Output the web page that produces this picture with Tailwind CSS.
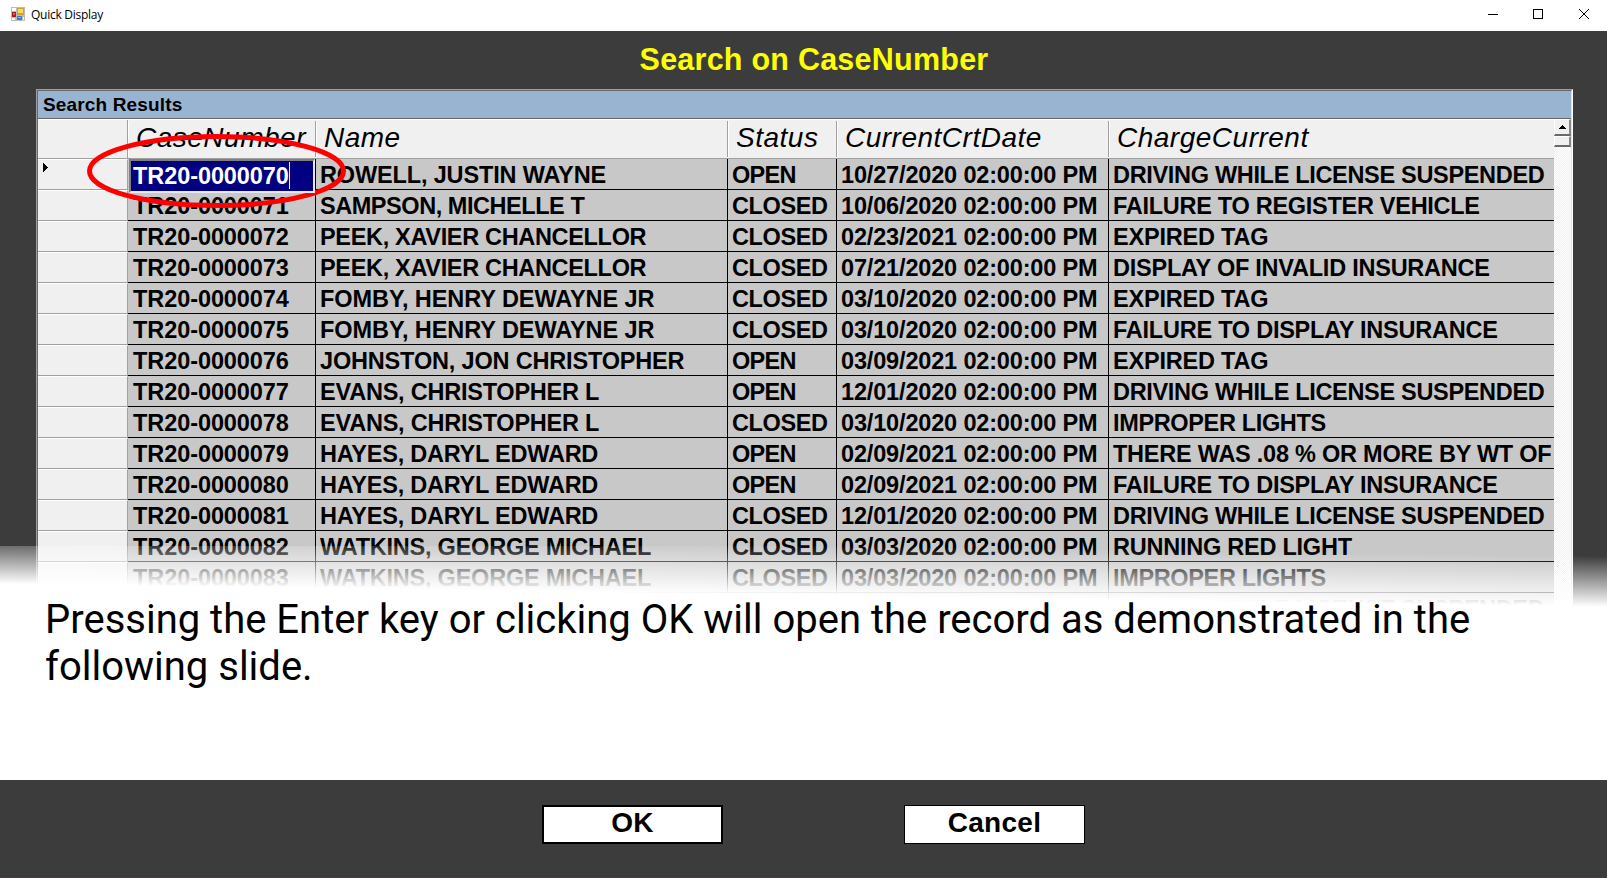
<!DOCTYPE html>
<html lang="en">
<head>
<meta charset="utf-8">
<title>Quick Display</title>
<script src="https://cdn.jsdelivr.net/npm/@tailwindcss/browser@4"></script>
</head>
<body class="relative flex h-[878px] w-[1607px] flex-col overflow-hidden bg-[#3c3c3c] font-['Liberation_Sans',Arial,sans-serif] text-black">
  <header class="flex h-[31px] shrink-0 items-center bg-white pl-[11px]">
    <svg class="mt-[-3px] h-[14px] w-[14px]" viewBox="0 0 14 14" shape-rendering="crispEdges">
      <path d="M0 0H14V14H0Z" fill="#b8bcc4"/><path d="M1 1H5V4H1ZM1 11H4V13H1ZM12 10H13V13H12Z" fill="#fff"/>
      <path d="M1 5H5V10H1Z" fill="#b01818"/><path d="M2 6H4V8H2Z" fill="#e06050"/>
      <path d="M6 1H13V8H6Z" fill="#d9a514"/><path d="M7 2H12V6H7Z" fill="#fbd95b"/>
      <path d="M6 9H11V13H6Z" fill="#3c78d8"/><path d="M7 10H10V11H7Z" fill="#8fb8f4"/>
    </svg>
    <span class="ml-[6px] mt-[-2px] whitespace-nowrap font-['Open_Sans',sans-serif] text-[12px] tracking-[-0.26px]">Quick Display</span>
    <svg class="ml-auto mr-[17px] mt-[-3px] h-[12px] w-[103px]" viewBox="0 0 103 12" fill="none" stroke="#000" shape-rendering="crispEdges">
      <path d="M1 6.5H11M46.500 1.500H55.500V10.500H46.500Z"/><path d="M92 1L102 11M102 1L92 11" shape-rendering="auto"/>
    </svg>
  </header>
  <h1 class="flex h-[58px] shrink-0 items-center justify-center pl-[21px] text-[30.500px] font-bold tracking-[0.24px] text-[#ffff00]"><span class="mt-[-1px] whitespace-nowrap">Search on CaseNumber</span></h1>
  <main class="ml-[36px] h-[560px] w-[1537px] shrink-0 border border-b-0 border-l-[#a0a0a0] border-r-white border-t-[#a0a0a0]">
   <div class="flex h-[559px] flex-col overflow-hidden border border-b-0 border-l-[#696969] border-r-[#e3e3e3] border-t-[#696969] bg-white">
    <div class="flex h-[28px] shrink-0 items-center border-b border-[#696969] bg-[#99b4d1] pl-[5px] pt-[2px] text-[19px] font-bold tracking-[0.15px]"><span>Search Results</span></div>
    <div class="flex">
      <div class="w-[1516px] shrink-0">
        <div class="grid h-[40px] grid-cols-[90px_188px_412px_109px_272px_445px] grid-rows-[38px] border-b border-t border-b-[#a0a0a0] border-t-white bg-[#f0f0f0] text-[28px] italic leading-[33px] tracking-[0.5px] whitespace-nowrap">
          <div class="border-r border-[#a0a0a0]"></div>
          <div class="my-px border-l border-r border-l-white border-r-[#a0a0a0] pl-[7px]">CaseNumber</div>
          <div class="my-px border-l border-r border-l-white border-r-[#a0a0a0] pl-[7px]">Name</div>
          <div class="my-px border-l border-r border-l-white border-r-[#a0a0a0] pl-[7px]">Status</div>
          <div class="my-px border-l border-r border-l-white border-r-[#a0a0a0] pl-[7px]">CurrentCrtDate</div>
          <div class="my-px border-l border-l-white pl-[7px]">ChargeCurrent</div>
        </div>
        <div id="rows" class="text-[23.500px] font-bold leading-[30px] whitespace-nowrap"></div>
      </div>
      <div class="flex w-[17px] shrink-0 flex-col bg-[repeating-conic-gradient(#ffffff_0_25%,#f0f0f0_0_50%)] bg-[length:2px_2px]">
        <div class="flex h-[17px] items-center justify-center border border-b-2 border-r-2 border-l-white border-t-white border-b-[#696969] border-r-[#888] bg-[#f0f0f0]"><svg class="h-[4px] w-[7px]" viewBox="0 0 7 4" shape-rendering="crispEdges"><path d="M3 0H4V1H5V2H6V3H7V4H0V3H1V2H2V1H3Z"/></svg></div>
        <div class="h-[11px] border border-b-2 border-r-2 border-l-white border-t-white border-b-[#696969] border-r-[#888] bg-[#f0f0f0]"></div>
      </div>
    </div>
   </div>
  </main>
  <footer class="absolute inset-x-0 top-[780px] flex h-[98px] items-start gap-[181px] border-b border-[#453e42] bg-[#3c3c3c] pl-[542px] pt-[25px] text-[28px] font-bold leading-[32px] tracking-[0.3px]">
    <button class="flex h-[39px] w-[181px] justify-center border-2 border-black bg-white">OK</button>
    <button class="flex h-[39px] w-[181px] justify-center border border-black bg-white pt-px">Cancel</button>
  </footer>
  <section class="absolute inset-x-0 top-[546px] h-[234px] bg-[linear-gradient(180.82deg,rgba(255,255,255,0)_10px,white_61px)]">
    <p class="pl-[45px] pt-[50px] font-[Roboto,sans-serif] text-[40px] leading-[47px]"><span class="whitespace-nowrap">Pressing the Enter key or clicking OK will open the record as demonstrated in the</span><br><span>following slide.</span></p>
  </section>
  <svg class="absolute left-[80px] top-[128px] h-[88px] w-[272px]" viewBox="80 128 272 88" fill="none"><ellipse cx="216.500" cy="171" rx="127" ry="34.500" stroke="#f00" stroke-width="5"/></svg>
  <script>
    const data = [
      ["TR20-0000070","ROWELL, JUSTIN WAYNE","OPEN","10/27/2020 02:00:00 PM","DRIVING WHILE LICENSE SUSPENDED"],
      ["TR20-0000071","SAMPSON, MICHELLE T","CLOSED","10/06/2020 02:00:00 PM","FAILURE TO REGISTER VEHICLE"],
      ["TR20-0000072","PEEK, XAVIER CHANCELLOR","CLOSED","02/23/2021 02:00:00 PM","EXPIRED TAG"],
      ["TR20-0000073","PEEK, XAVIER CHANCELLOR","CLOSED","07/21/2020 02:00:00 PM","DISPLAY OF INVALID INSURANCE"],
      ["TR20-0000074","FOMBY, HENRY DEWAYNE JR","CLOSED","03/10/2020 02:00:00 PM","EXPIRED TAG"],
      ["TR20-0000075","FOMBY, HENRY DEWAYNE JR","CLOSED","03/10/2020 02:00:00 PM","FAILURE TO DISPLAY INSURANCE"],
      ["TR20-0000076","JOHNSTON, JON CHRISTOPHER","OPEN","03/09/2021 02:00:00 PM","EXPIRED TAG"],
      ["TR20-0000077","EVANS, CHRISTOPHER L","OPEN","12/01/2020 02:00:00 PM","DRIVING WHILE LICENSE SUSPENDED"],
      ["TR20-0000078","EVANS, CHRISTOPHER L","CLOSED","03/10/2020 02:00:00 PM","IMPROPER LIGHTS"],
      ["TR20-0000079","HAYES, DARYL EDWARD","OPEN","02/09/2021 02:00:00 PM","THERE WAS .08 % OR MORE BY WT OF"],
      ["TR20-0000080","HAYES, DARYL EDWARD","OPEN","02/09/2021 02:00:00 PM","FAILURE TO DISPLAY INSURANCE"],
      ["TR20-0000081","HAYES, DARYL EDWARD","CLOSED","12/01/2020 02:00:00 PM","DRIVING WHILE LICENSE SUSPENDED"],
      ["TR20-0000082","WATKINS, GEORGE MICHAEL","CLOSED","03/03/2020 02:00:00 PM","RUNNING RED LIGHT"],
      ["TR20-0000083","WATKINS, GEORGE MICHAEL","CLOSED","03/03/2020 02:00:00 PM","IMPROPER LIGHTS"],
      ["","","","","DRIVING WHILE LICENSE SUSPENDED"]
    ];
    // Letter spacing, in pixels, of the grid's cell texts; the column's default applies to the rest.
    const spacing = {
      "ROWELL, JUSTIN WAYNE":-.15, "SAMPSON, MICHELLE T":-.45, "PEEK, XAVIER CHANCELLOR":-.33,
      "FOMBY, HENRY DEWAYNE JR":-.07, "JOHNSTON, JON CHRISTOPHER":-.17, "OPEN":-.75, "CLOSED":-.4,
      "DRIVING WHILE LICENSE SUSPENDED":-.32, "FAILURE TO REGISTER VEHICLE":-.28, "EXPIRED TAG":-.2,
      "IMPROPER LIGHTS":-.35
    };
    const columnSpacing = [-.08, -.23, 0, -.16, -.24];
    document.getElementById("rows").innerHTML = data.map((r, i) =>
      `<div class="grid h-[31px] grid-cols-[90px_188px_412px_109px_272px_445px] grid-rows-[31px]">
        <div class="border-b border-r border-t border-b-[#a0a0a0] border-r-[#a0a0a0] border-t-white bg-[#f0f0f0] pl-[5px] pt-[3px]">${i ? "" : '<svg class="h-[9px] w-[5px]" viewBox="0 0 5 9" shape-rendering="crispEdges"><path d="M0 0H1V1H2V2H3V3H4V4H5V5H4V6H3V7H2V8H1V9H0Z"/></svg>'}</div>` +
      r.map((t, c) => {
        const text = `<span style="letter-spacing:${spacing[t] ?? columnSpacing[c]}px">${t}</span>`;
        return i === 0 && c === 0
        ? `<div class="relative border-r border-black bg-[#c8c8c8]"><div class="absolute left-px top-0 z-10 flex h-[34px] w-[186px] border-2 border-b-[#e8e8e8] border-l-[#808080] border-r-[#e8e8e8] border-t-[#808080] bg-[#000080] pl-[2px] leading-[31px] text-white">${text}<i class="mt-px h-[27px] w-px bg-[#ffff7f]"></i></div></div>`
        : `<div class="border-b border-black bg-[#c8c8c8] pt-px ${c < 4 ? "border-r" : ""} ${c ? "pl-[4px]" : "pl-[5px]"}">${text}</div>`;
      }).join("") + "</div>").join("");
  </script>
</body>
</html>
